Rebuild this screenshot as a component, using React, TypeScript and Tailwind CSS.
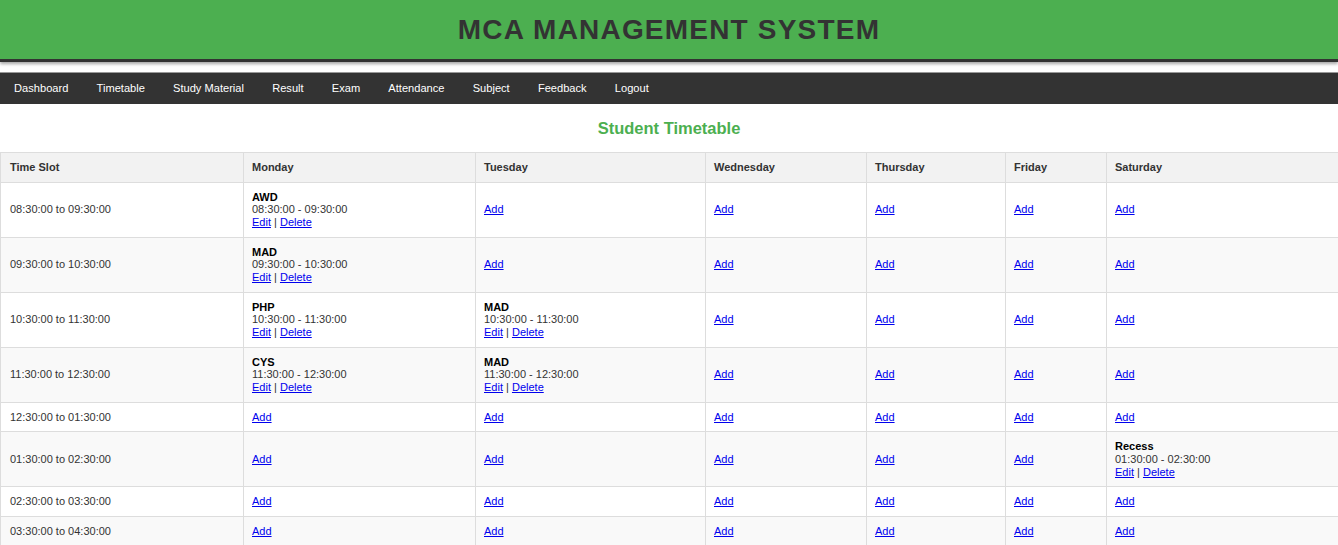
import React from 'react'

type Entry = { subject: string; time: string }

const days = ['Monday', 'Tuesday', 'Wednesday', 'Thursday', 'Friday', 'Saturday']
const colWidths = ['w-[243px]', 'w-[232px]', 'w-[230px]', 'w-[161px]', 'w-[139px]', 'w-[101px]', 'w-[232px]']

const slots = [
  '08:30:00 to 09:30:00',
  '09:30:00 to 10:30:00',
  '10:30:00 to 11:30:00',
  '11:30:00 to 12:30:00',
  '12:30:00 to 01:30:00',
  '01:30:00 to 02:30:00',
  '02:30:00 to 03:30:00',
  '03:30:00 to 04:30:00',
]

// key = slot index - day index
const entries: Record<string, Entry> = {
  '0-0': { subject: 'AWD', time: '08:30:00 - 09:30:00' },
  '1-0': { subject: 'MAD', time: '09:30:00 - 10:30:00' },
  '2-0': { subject: 'PHP', time: '10:30:00 - 11:30:00' },
  '2-1': { subject: 'MAD', time: '10:30:00 - 11:30:00' },
  '3-0': { subject: 'CYS', time: '11:30:00 - 12:30:00' },
  '3-1': { subject: 'MAD', time: '11:30:00 - 12:30:00' },
  '5-5': { subject: 'Recess', time: '01:30:00 - 02:30:00' },
}

const navItems = ['Dashboard', 'Timetable', 'Study Material', 'Result', 'Exam', 'Attendance', 'Subject', 'Feedback', 'Logout']

function Cell({ entry }: { entry?: Entry }) {
  if (!entry) {
    return (
      <a href="#" className="text-[#0000ee] underline">
        Add
      </a>
    )
  }
  return (
    <>
      <strong className="block text-black">{entry.subject}</strong>
      <span className="block">{entry.time}</span>
      <a href="#" className="text-[#0000ee] underline">
        Edit
      </a>{' '}
      |{' '}
      <a href="#" className="text-[#0000ee] underline">
        Delete
      </a>
    </>
  )
}

export default function App() {
  return (
    <div className="min-h-screen bg-white font-['Liberation_Sans',Arial,sans-serif] text-[11px] leading-[12.65px] text-[#333]">
      <header className="flex h-[62px] items-center justify-center border-b-[3px] border-[#333] bg-[#4caf50] pt-[1px] shadow-[0_2px_3px_rgba(0,0,0,0.35)]">
        <h1 className="text-[28px] leading-[32px] font-bold tracking-[1.2px] text-[#333]">MCA MANAGEMENT SYSTEM</h1>
      </header>

      <nav className="mt-[10px] flex h-[32px] items-center border-t border-[#999] bg-[#333]">
        {navItems.map((item) => (
          <a key={item} href="#" className="px-[14.1px] text-[11.1px] text-white">
            {item}
          </a>
        ))}
      </nav>

      <h2 className="pt-[14px] pb-[14px] text-center text-[16.5px] font-bold leading-[20px] text-[#4caf50]">
        Student Timetable
      </h2>

      <table className="w-full table-fixed border-collapse">
        <colgroup>
          {colWidths.map((w, i) => (
            <col key={i} className={w} />
          ))}
        </colgroup>
        <thead>
          <tr className="bg-[#f2f2f2]">
            <th className="border border-[#ddd] px-[9px] py-[8px] text-left font-bold">Time Slot</th>
            {days.map((d) => (
              <th key={d} className="border border-[#ddd] px-[8px] py-[8px] text-left font-bold">
                {d}
              </th>
            ))}
          </tr>
        </thead>
        <tbody>
          {slots.map((slot, r) => (
            <tr key={slot} className={r % 2 === 1 ? 'bg-[#f9f9f9]' : 'bg-white'}>
              <td className="border border-[#ddd] px-[9px] py-[8px] align-middle">{slot}</td>
              {days.map((d, c) => (
                <td key={d} className="border border-[#ddd] px-[8px] py-[8px] align-middle">
                  <Cell entry={entries[`${r}-${c}`]} />
                </td>
              ))}
            </tr>
          ))}
        </tbody>
      </table>
    </div>
  )
}
